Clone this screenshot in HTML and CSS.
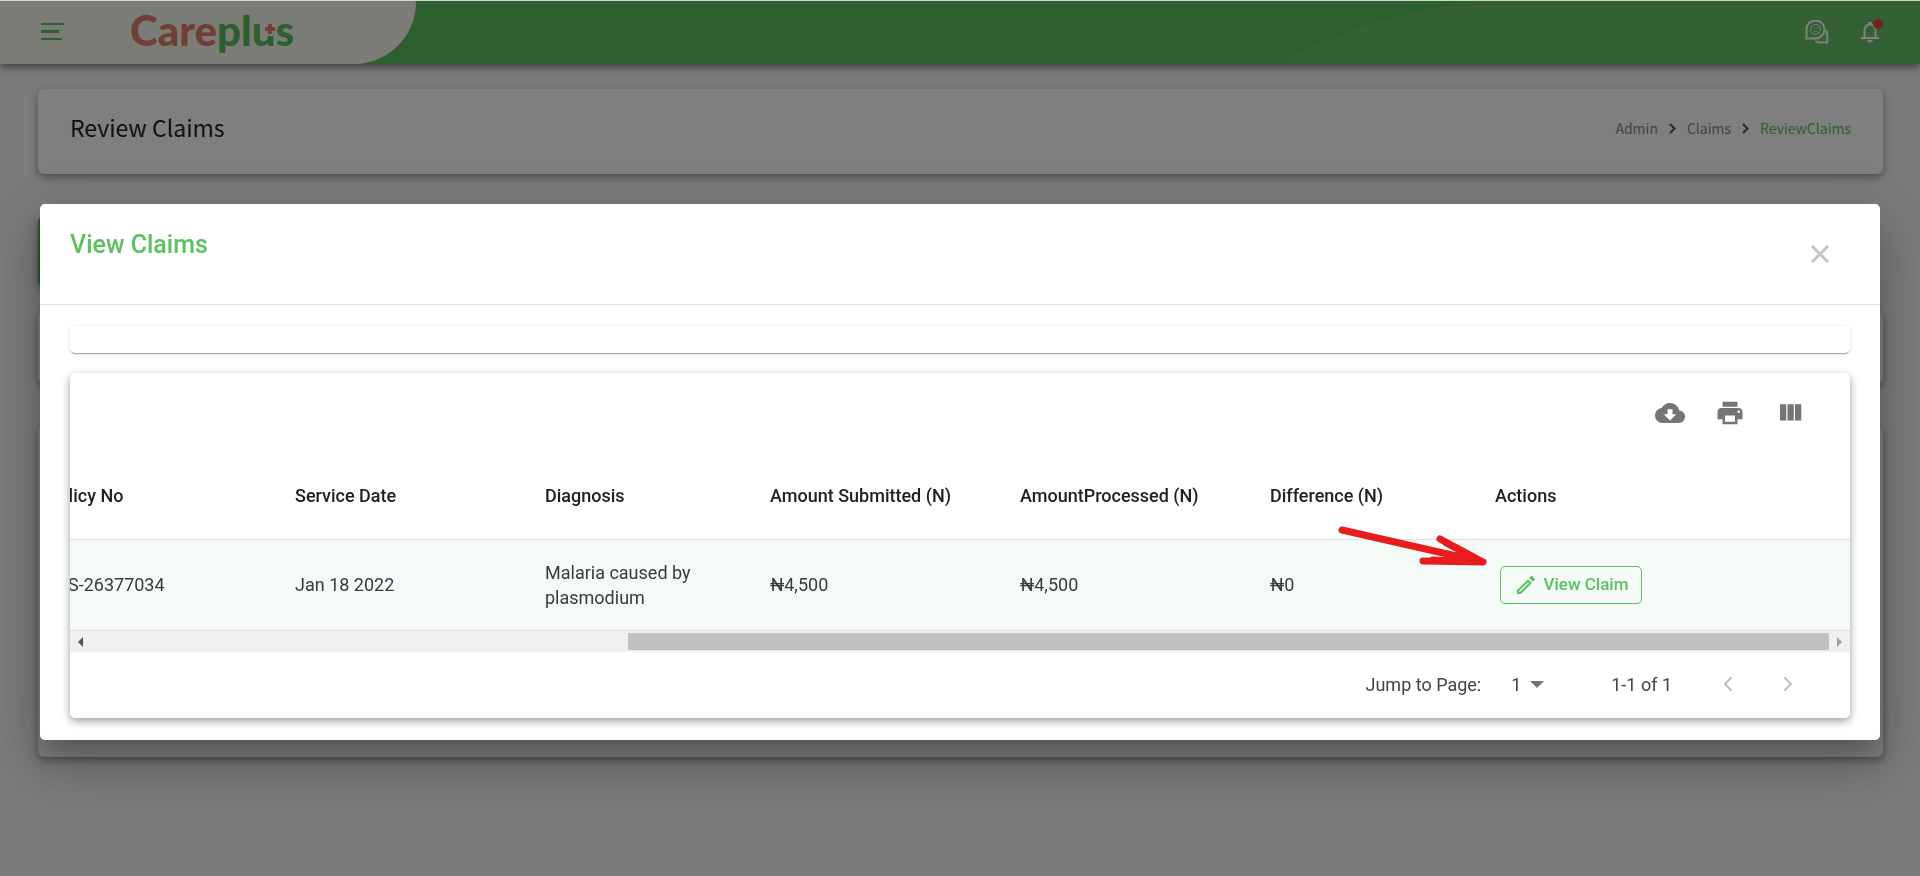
FILE: index.html
```html
<!DOCTYPE html>
<html lang="en">
<head>
<meta charset="utf-8">
<title>Careplus - Review Claims</title>
<link rel="stylesheet" href="styles.css">
</head>
<body>
<header class="topbar">
  <div class="brand">
    <button class="menu-btn" aria-label="Menu"><svg width="23" height="17" viewBox="0 0 23 17"><path d="M0 0h23v2H0zM0 7h18v3H0zM0 15h21v2H0z"/></svg></button>
    <svg class="logo" width="172" height="60" viewBox="0 0 172 60" role="img" aria-label="Careplus">
      <text x="3" y="44" class="logo-text"><tspan class="logo-red">Care</tspan><tspan class="logo-green">plus</tspan></text>
      <path class="logo-gap" d="M143 20v14M136 27h14"/>
      <path class="logo-plus" d="M143 22v10M138 27h10"/>
    </svg>
  </div>
  <svg class="swoosh" viewBox="0 0 640 63" preserveAspectRatio="none"><path d="M0 63Q85 14 195 0H640V63Z"/></svg>
  <nav class="top-actions">
    <button aria-label="Messages"><svg width="24" height="24" viewBox="0 0 24 24" fill="none" stroke="#fff" stroke-width="2"><path d="M1.500 18.500v-8.500A9 9 0 1 1 10.500 18.500z"/><circle cx="10.500" cy="9.500" r="5" stroke-width="1"/><path d="M8.500 8.500h1M11.500 8.500h1M8.500 12q2-1.500 4 0" stroke-width="1"/><path d="M21 10q1.500 3 1.200 6v6.500h-7q-3 0-5-1.500" /></svg></button>
    <button class="bell" aria-label="Notifications"><svg width="20" height="22" viewBox="0 0 20 22"><path fill="none" stroke="#fff" stroke-width="2" d="M4.500 17V9.500a5.500 6 0 0 1 11 0V17M1 17h18"/><path fill="#fff" d="M8 1h4v3H8zM7 19h6q-1 2.500-3 2.500T7 19z"/></svg><span class="dot"></span></button>
  </nav>
</header>
<main class="page">
  <section class="card heading">
    <h1>Review Claims</h1>
    <nav class="crumbs" aria-label="Breadcrumb">
      <a href="#">Admin</a>
      <svg width="7" height="11" viewBox="0 0 7 11"><path d="M1 1l4.500 4.500L1 10"/></svg>
      <a href="#">Claims</a>
      <svg width="7" height="11" viewBox="0 0 7 11"><path d="M1 1l4.500 4.500L1 10"/></svg>
      <a href="#" class="current">ReviewClaims</a>
    </nav>
  </section>
  <section class="card tabs"></section>
  <section class="card filter"></section>
  <section class="card results"></section>
</main>
<div class="scrim">
  <div class="dialog" role="dialog" aria-labelledby="dialog-title">
    <div class="dialog-head">
      <h2 id="dialog-title">View Claims</h2>
      <button class="close" aria-label="Close"><svg width="20" height="20" viewBox="0 0 20 20"><path d="M2 2l16 16M18 2L2 18"/></svg></button>
    </div>
    <div class="dialog-body">
      <div class="strip"></div>
      <div class="panel">
        <div class="toolbar">
          <button aria-label="Download"><svg width="30" height="30" viewBox="0 0 24 24"><path d="M19.350 10.040C18.670 6.590 15.640 4 12 4 9.110 4 6.600 5.640 5.350 8.040 2.340 8.360 0 10.910 0 14c0 3.310 2.690 6 6 6h13c2.760 0 5-2.240 5-5 0-2.640-2.050-4.780-4.650-4.960zM17 13l-5 5-5-5h3V9h4v4h3z"/></svg></button>
          <button aria-label="Print"><svg width="30" height="30" viewBox="0 0 24 24"><path d="M19 8H5c-1.660 0-3 1.340-3 3v6h4v4h12v-4h4v-6c0-1.660-1.340-3-3-3zm-3 11H8v-5h8v5zm3-7c-.55 0-1-.45-1-1s.45-1 1-1 1 .45 1 1-.45 1-1 1zm-1-9H6v4h12V3z"/></svg></button>
          <button aria-label="View columns"><svg width="30" height="30" viewBox="0 0 24 24"><path d="M10 18h5V5h-5v13zm-6 0h5V5H4v13zM16 5v13h5V5h-5z"/></svg></button>
        </div>
        <div class="table-wrap">
          <table>
            <colgroup><col class="wide"><col class="wide"><col class="mid"><col class="wide"><col class="wide"><col class="mid"><col></colgroup>
            <thead><tr><th class="policy-head">Policy No</th><th>Service Date</th><th>Diagnosis</th><th>Amount Submitted (N)</th><th>AmountProcessed (N)</th><th>Difference (N)</th><th>Actions</th></tr></thead>
            <tbody><tr><td class="policy">S-26377034</td><td>Jan 18 2022</td><td>Malaria caused by plasmodium</td><td>₦4,500</td><td>₦4,500</td><td>₦0</td>
              <td><button class="view-btn"><svg width="24" height="24" viewBox="0 0 24 24"><path d="M14.060 9.020l.92.920L5.920 19H5v-.92l9.060-9.060M17.660 3c-.25 0-.51.1-.7.290l-1.830 1.830 3.750 3.750 1.830-1.830c.39-.39.39-1.020 0-1.410l-2.340-2.340c-.2-.2-.45-.29-.71-.29zm-3.600 3.190L3 17.250V21h3.750L17.810 9.940l-3.750-3.750z"/></svg>View Claim</button></td></tr></tbody>
          </table>
          <svg class="pointer" width="152" height="44" viewBox="0 0 152 44"><path d="M4 5L145 37M102 14L145 37L85 36M108 18L145 37L95 35M112 30l33 7"/></svg>
        </div>
        <div class="scrollbar">
          <svg width="5" height="10" viewBox="0 0 5 10"><path d="M5 0v10L0 5z" fill="#505050"/></svg>
          <div class="track"><div class="thumb"></div></div>
          <svg width="5" height="10" viewBox="0 0 5 10"><path d="M0 0v10l5-5z" fill="#a0a0a0"/></svg>
        </div>
        <div class="pager">
          <label for="page">Jump to Page:</label>
          <span class="picker"><select id="page"><option>1</option></select><svg width="14" height="7" viewBox="0 0 14 7"><path d="M0 0h14L7 7z"/></svg></span>
          <span class="range">1-1 of 1</span>
          <button aria-label="Previous page"><svg width="10" height="16" viewBox="0 0 10 16"><path d="M8.500 1.500L2 8l6.500 6.500"/></svg></button>
          <button aria-label="Next page"><svg width="10" height="16" viewBox="0 0 10 16"><path d="M1.500 1.500L8 8l-6.500 6.500"/></svg></button>
        </div>
      </div>
    </div>
  </div>
</div>
</body>
</html>
```
FILE: styles.css
```css
* { box-sizing: border-box; }
body { margin: 0; min-height: 100vh; background: #f6f6f9; border-top: 1px solid #d3d6d5; font-family: Roboto, "Liberation Sans", sans-serif; color: #333; overflow: hidden; }
button { border: 0; padding: 0; background: none; display: inline-flex; align-items: center; justify-content: center; font: inherit; cursor: pointer; }
h1, h2 { margin: 0; }

.topbar { display: flex; height: 63px; background: #5bc15c; box-shadow: 0 3px 8px rgba(0,0,0,.5); position: relative; }
.brand { width: 416px; display: flex; align-items: center; padding: 0 0 2px 41px; background: #f7f8ea; border-bottom-right-radius: 62px; }
.menu-btn { fill: #5bc15c; }
.logo { margin-left: 63px; }
.logo-text { font: 900 42px Lato, sans-serif; }
.logo-red { fill: #e07f6c; }
.logo-green { fill: #5bc15c; }
.logo-gap { stroke: #f7f8ea; stroke-width: 7; }
.logo-plus { stroke: #e07f6c; stroke-width: 4; }
.swoosh { position: absolute; right: 0; top: 0; width: 640px; height: 63px; fill: #66c266; }
.top-actions { position: relative; margin-left: auto; padding: 0 40px 2px 0; display: flex; align-items: center; gap: 31px; }
.bell { position: relative; }
.dot { position: absolute; right: -3px; top: -2px; width: 10px; height: 10px; border-radius: 50%; background: #f44336; }

.page { padding: 25px 37px 0 38px; }
.card { background: #fff; border-radius: 6px; box-shadow: 0 3px 8px rgba(0,0,0,.4); }
.heading { height: 85px; display: flex; justify-content: space-between; padding: 20px 32px 0 32px; font-family: "Noto Sans CJK SC", "Open Sans", sans-serif; }
.heading h1 { font-size: 23px; line-height: 36px; font-weight: 400; color: #222; }
.crumbs { display: flex; align-items: center; gap: 11px; height: 38px; font-size: 14px; }
.crumbs a { color: #888; text-decoration: none; }
.crumbs .current { color: #5bc15c; }
.crumbs svg { fill: none; stroke: #555; stroke-width: 2; }
.tabs { height: 71px; width: 50%; margin-top: 42px; background: #4caf50; }
.filter { height: 72px; margin-top: 25px; }
.results { height: 332px; margin-top: 41px; }

.scrim { position: fixed; inset: 1px 0 0; padding: 203px 40px 0; background: rgba(0,0,0,.5); }
.dialog { background: #fff; border-radius: 5px; box-shadow: 0 14px 19px -9px rgba(0,0,0,.2), 0 30px 48px 4px rgba(0,0,0,.14), 0 11px 58px 10px rgba(0,0,0,.12); }
.dialog-head { display: flex; justify-content: space-between; height: 101px; padding: 24px 50px 0 30px; border-bottom: 1px solid #e0e0e0; }
.dialog-head h2 { font-size: 25px; line-height: 34px; font-weight: 500; color: #5bc15c; }
.close { width: 20px; height: 52px; }
.close svg { fill: none; stroke: #c3c8c2; stroke-width: 3; }
.dialog-body { padding: 21px 30px 22px; }
.strip { height: 27px; border-radius: 5px; box-shadow: 0 2px 1px -1px rgba(0,0,0,.2), 0 1px 1px rgba(0,0,0,.14), 0 1px 4px rgba(0,0,0,.12); }
.panel { margin-top: 20px; border-radius: 5px; box-shadow: 0 3px 8px rgba(0,0,0,.4); }
.toolbar { height: 80px; display: flex; justify-content: flex-end; align-items: center; gap: 30px; padding-right: 45px; fill: #757575; }

.table-wrap { position: relative; overflow: hidden; }
table { width: calc(100% + 50px); margin-left: -50px; table-layout: fixed; border-collapse: separate; border-spacing: 0; font-size: 18px; line-height: 25px; text-align: left; }
.wide { width: 250px; }
.mid { width: 225px; }
th, td { padding: 0 25px 1px; border-bottom: 1px solid #e0e0e0; }
th { height: 87px; font-weight: 500; color: #212121; }
td { height: 91px; background: #f4fbf7; color: #3a3a3a; }
.policy-head { padding-left: 27px; }
.policy { padding-left: 48px; }
.view-btn { width: 142px; height: 38px; margin-left: 5px; gap: 6px; border: 1px solid #5bc15c; border-radius: 5px; font-size: 17px; font-weight: 500; color: #5bc15c; fill: #5bc15c; vertical-align: middle; white-space: nowrap; }
.pointer { position: absolute; left: 1268px; top: 72px; fill: none; stroke: #e81c1c; stroke-width: 7; stroke-linecap: round; stroke-linejoin: round; }

.scrollbar { height: 21px; display: flex; align-items: center; padding: 0 8px; background: #f0f0f0; }
.track { flex: 1; margin: 0 8px 0 5px; }
.thumb { width: 69%; height: 17px; margin-left: auto; background: #c1c1c1; }

.pager { height: 66px; display: flex; align-items: center; justify-content: flex-end; padding: 0 57px 2px 0; font-size: 18px; color: #444; }
.picker { display: flex; align-items: center; gap: 8px; margin: 0 67px 0 30px; fill: #757575; }
.picker select { appearance: none; border: 0; padding: 0; background: none; font: inherit; color: inherit; }
.range { margin-right: 51px; }
.pager button { fill: none; stroke: #bdbdbd; stroke-width: 2; }
.pager button + button { margin-left: 50px; }
```
